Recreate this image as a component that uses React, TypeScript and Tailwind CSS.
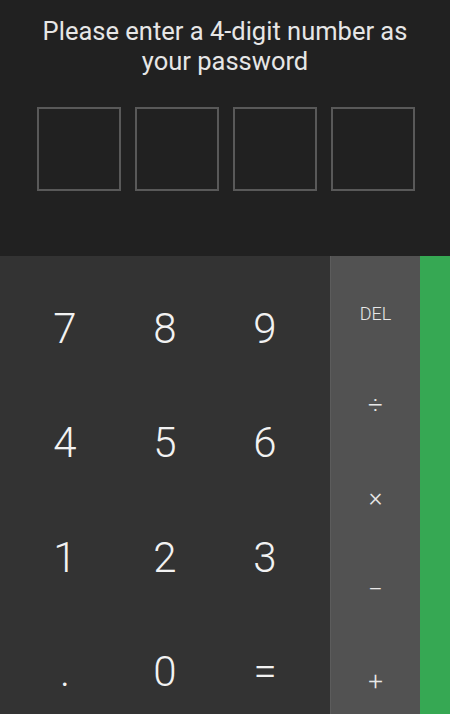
const digits = ["7", "8", "9", "4", "5", "6", "1", "2", "3", ".", "0", "="];
const ops = ["DEL", "÷", "×", "−", "+"];

export default function App() {
  return (
    <div
      className="w-[450px] h-[714px] overflow-hidden flex flex-col bg-[#212121] text-[#ececec]"
      style={{ fontFamily: "Roboto, 'Noto Sans', sans-serif" }}
    >
      <div className="h-[256px] shrink-0 flex flex-col items-center">
        <p className="mt-[16px] text-center text-[25.5px] leading-[30px] text-[#e6e6e6]">
          Please enter a 4-digit number as
          <br />
          your password
        </p>
        <div className="mt-[31px] flex gap-[14px] pl-[2px]">
          {[0, 1, 2, 3].map((i) => (
            <div key={i} className="w-[84px] h-[84px] border-2 border-[#595959]" />
          ))}
        </div>
      </div>

      <div className="flex flex-1 min-h-0">
        <div className="w-[330px] bg-[#333333] px-[15px] pt-[15px] overflow-hidden">
          <div className="grid grid-cols-3 grid-rows-[repeat(4,114.5px)]">
            {digits.map((d) => (
              <button
                key={d}
                className="flex items-center justify-center text-[42px] font-light text-[#f2f2f2]"
              >
                {d}
              </button>
            ))}
          </div>
        </div>
        <div className="w-[90px] bg-[#525252] border-l border-[#5c5c5c] pt-[11px] flex flex-col overflow-hidden">
          {ops.map((o) => (
            <button
              key={o}
              className={
                o === "DEL"
                  ? "h-[92px] shrink-0 flex items-center justify-center text-[18px] font-light text-[#e8e8e8]"
                  : "h-[92px] shrink-0 flex items-center justify-center text-[26px] font-light text-[#e8e8e8]"
              }
            >
              {o}
            </button>
          ))}
        </div>
        <div className="flex-1 bg-[#36a853]" />
      </div>
    </div>
  );
}
